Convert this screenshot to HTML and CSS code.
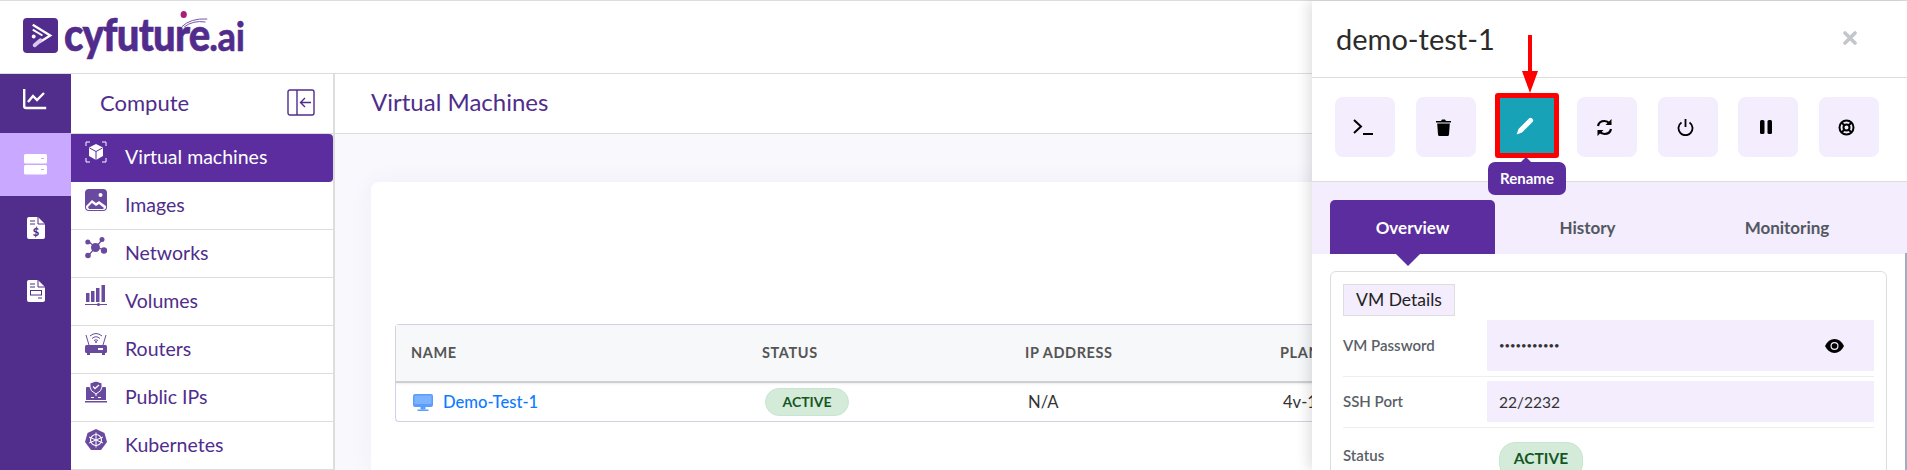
FILE: index.html
```html
<!doctype html>
<html>
<head>
<meta charset="utf-8">
<title>Virtual Machines</title>
<link rel="stylesheet" href="styles.css">
</head>
<body>
<div class="page">
	<header class="topbar">
		<svg class="logo-mark" viewBox="0 0 36 36">
			<rect width="36" height="36" rx="4" fill="#522c8d"/>
			<path d="M10 7l18 11-11 7" fill="none" stroke="#fff" stroke-width="2.400"/>
			<path d="M10 12l10 6" fill="none" stroke="#fff" stroke-width="2"/>
			<path d="M12 28l6-5" fill="none" stroke="#d9c8f2" stroke-width="4" stroke-linecap="round"/>
			<circle cx="11" cy="19" r="2" fill="#fff"/>
		</svg>
		<div class="logo-text">cyfuture<span class="logo-ai">.ai</span><i class="logo-dot"></i>
			<svg class="logo-swoosh" width="30" height="12" viewBox="0 0 30 12" fill="none" stroke="#6b4aa3"><path d="M0 11q10-9 29-8M3 11q10-7 24-5"/></svg>
		</div>
	</header>
	<div class="body-row">
		<nav class="rail">
			<a class="rail-item rail-first">
				<svg width="24" height="22" viewBox="0 0 24 22" fill="none" stroke="#fff" stroke-width="2.400"><path d="M1.200 1v17q0 2 2 2h20"/><path d="M5 14l5-6 4 4 7-7"/></svg>
			</a>
			<a class="rail-item rail-on">
				<svg width="24" height="21" viewBox="0 0 24 21" fill="#fff"><rect y="0" width="23" height="9.500" rx="1.500"/><rect y="11" width="23" height="9.500" rx="1.500"/><rect x="17" y="4" width="3" height="1" fill="#c9a8ff"/><rect x="17" y="15" width="3" height="1" fill="#c9a8ff"/></svg>
			</a>
			<a class="rail-item">
				<svg width="18" height="22" viewBox="0 0 18 22"><path d="M2 0h9l7 7v13q0 2-2 2H2q-2 0-2-2V2q0-2 2-2z" fill="#fff"/><path d="M11 0v7h7" fill="none" stroke="#512d8c"/><path d="M3 4h5M3 7h5" stroke="#512d8c"/><text x="9" y="19" text-anchor="middle" class="rail-dollar">$</text></svg>
			</a>
			<a class="rail-item">
				<svg width="18" height="22" viewBox="0 0 18 22"><path d="M2 0h9l7 7v13q0 2-2 2H2q-2 0-2-2V2q0-2 2-2z" fill="#fff"/><path d="M11 0v7h7" fill="none" stroke="#512d8c"/><path d="M3 4h5M3 7h5M11 18h4" stroke="#512d8c"/><rect x="3.500" y="10.500" width="11" height="4.500" fill="none" stroke="#512d8c"/></svg>
			</a>
		</nav>
		<aside class="subnav">
			<div class="subnav-head">
				<span class="subnav-title">Compute</span>
				<svg width="28" height="27" viewBox="0 0 28 27" fill="none" stroke="#512d8c" stroke-width="1.400"><rect x="1" y="1" width="26" height="25" rx="2"/><path d="M10 1v25M24 13.500H14M18 9l-4.500 4.500L18 18"/></svg>
			</div>
			<ul class="subnav-list">
				<li class="subnav-item active">
					<svg class="subnav-icon" viewBox="0 0 22 22"><path d="M1 5V1h4M17 1h4v4M21 17v4h-4M5 21H1v-4" fill="none" stroke="#fff"/><path d="M11 3l7 3.500v8.500l-7 4-7-4V6.500z" fill="#fff"/><path d="M4.500 7l6.500 3.500L17.500 7M11 10.500V19" fill="none" stroke="#5b2d9e"/></svg>
					Virtual machines
				</li>
				<li class="subnav-item">
					<svg class="subnav-icon" viewBox="0 0 22 22"><path d="M4 0h14q4 0 4 4v14q0 4-4 4H4q-4 0-4-4V4q0-4 4-4z" fill="#6a4a9f"/><circle cx="15.500" cy="6" r="2" fill="#fff"/><path d="M1 17l6-6 4 3 3-2 7 5v1q0 3-3 3H4q-3 0-3-3z" fill="#fff"/><path d="M3 18l4-4 4 3 3-2 5 4-1 1H4z" fill="#6a4a9f"/></svg>
					Images
				</li>
				<li class="subnav-item">
					<svg class="subnav-icon" viewBox="0 0 22 22" fill="#6a4a9f"><path d="M3 4l7 6M17 3l-6 7M3 19l7-8M11 10l8 3" stroke="#6a4a9f" stroke-width="1.200"/><circle cx="10.500" cy="10.500" r="4.500"/><circle cx="2.800" cy="5" r="2.500"/><circle cx="17" cy="2.500" r="2.500"/><circle cx="19" cy="13.500" r="3.200"/><circle cx="3" cy="18.500" r="2.800"/></svg>
					Networks
				</li>
				<li class="subnav-item">
					<svg class="subnav-icon" viewBox="0 0 22 22" fill="#6a4a9f"><rect x="1" y="8" width="3.500" height="9"/><rect x="6" y="6" width="3.500" height="11"/><rect x="11" y="3" width="3.500" height="14"/><rect x="16.500" y="0" width="3.500" height="17"/><rect x="0" y="19" width="22" height="1"/><circle cx="13.500" cy="19.500" r="1.500"/></svg>
					Volumes
				</li>
				<li class="subnav-item">
					<svg class="subnav-icon" viewBox="0 0 22 22"><path d="M7 5.500q4-3.500 8 0M5 3q6-5 12 0M9 7.500q2-1.500 4 0" fill="none" stroke="#6a4a9f"/><path d="M1 2l3 10M21 2l-3 10" stroke="#6a4a9f"/><circle cx="11" cy="9" r="1" fill="#6a4a9f"/><rect y="12" width="22" height="8" rx="1.500" fill="#6a4a9f"/><rect x="13" y="15" width="5" height="2" fill="#fff"/><rect x="2" y="20" width="3" height="2" fill="#6a4a9f"/><rect x="17" y="20" width="3" height="2" fill="#6a4a9f"/></svg>
					Routers
				</li>
				<li class="subnav-item">
					<svg class="subnav-icon" viewBox="0 0 22 22"><path d="M2 6h18q1 0 1 1v12H1V7q0-1 1-1z" fill="#6a4a9f"/><path d="M11 0l6 2v4q0 4-6 7-6-3-6-7V2z" fill="#6a4a9f" stroke="#fff"/><path d="M8 5.500l2 2 4-3.500" fill="none" stroke="#fff" stroke-width="1.300"/><path d="M11 12v3M6 16.500h3M13 16.500h3" stroke="#fff"/><rect y="20" width="22" height="1.500" fill="#6a4a9f"/></svg>
					Public IPs
				</li>
				<li class="subnav-item">
					<svg class="subnav-icon" viewBox="0 0 22 22"><path d="M11 0l8.500 4 2.500 9-6 8H6l-6-8 2.500-9z" fill="#6a4a9f"/><circle cx="11" cy="11" r="5.500" fill="none" stroke="#fff" stroke-width="1.200"/><path d="M11 3.500v15M4 8l14 6M18 8L4 14" stroke="#fff"/></svg>
					Kubernetes
				</li>
			</ul>
		</aside>
		<main class="main">
			<h1 class="main-title">Virtual Machines</h1>
			<div class="main-body">
				<section class="card">
					<div class="vm-table">
						<div class="vm-row vm-head">
							<div>NAME</div>
							<div>STATUS</div>
							<div>IP ADDRESS</div>
							<div>PLAN</div>
						</div>
						<div class="vm-row vm-data">
							<div class="vm-name">
								<svg width="20" height="17" viewBox="0 0 20 17" fill="#5b9dff"><path d="M2 0h16q2 0 2 2v9q0 2-2 2H2q-2 0-2-2V2q0-2 2-2z"/><rect x="1.500" y="1.500" width="17" height="8.500" fill="#7db2ff"/><rect x="7.500" y="13" width="5" height="2.500"/><rect x="4.500" y="15.500" width="11" height="1.500"/></svg>
								Demo-Test-1
							</div>
							<div><span class="pill">ACTIVE</span></div>
							<div class="vm-ip">N/A</div>
							<div class="vm-ip">4v-16</div>
						</div>
					</div>
				</section>
			</div>
		</main>
	</div>

	<!-- side panel, sits over the table -->
	<section class="panel">
		<div class="panel-head">
			<h2 class="panel-title">demo-test-1</h2>
			<svg class="panel-close" width="14" height="14" viewBox="0 0 14 14"><path d="M2 2l10 10M12 2L2 12" stroke="#c3c7cb" stroke-width="3.600" stroke-linecap="round"/></svg>
		</div>
		<div class="actions">
			<button class="act">
				<svg width="20" height="16" viewBox="0 0 20 16" fill="none" stroke="#000" stroke-width="2"><path d="M1 1l7 6.500L1 14M10 15h10"/></svg>
			</button>
			<button class="act">
				<svg width="15" height="17" viewBox="0 0 15 17"><path d="M1.200 4.500h12.600l-.8 11q-.1 1.500-1.500 1.500H3.500q-1.400 0-1.500-1.500z"/><path d="M0 2h5l1-1.500h3L10 2h5v1.500H0z"/></svg>
			</button>
			<button class="act act-on">
				<svg width="18" height="18" viewBox="0 0 18 18" fill="#fff"><path d="M12 2.500l3.500 3.500L6 15.500 .6 17.400 2.500 12z"/><path d="M13 1.500q1.500-1.500 3-.1l.7.700q1.300 1.500-.2 3L15.300 6 11.900 2.600z"/></svg>
			</button>
			<button class="act">
				<svg width="17" height="17" viewBox="0 0 17 17" fill="none" stroke="#000" stroke-width="2.200"><path d="M2 7q1-5 6.500-5 3 0 5 2.500M15 10q-1 5-6.500 5-3 0-5-2.500"/><path d="M15.500 0v6h-6zM1.500 17v-6h6z" fill="#000" stroke="none"/></svg>
			</button>
			<button class="act">
				<svg width="17" height="17" viewBox="0 0 17 17" fill="none" stroke="#000" stroke-width="1.800"><path d="M4.500 3.500a7 7 0 1 0 8 0M8.500 0v8"/></svg>
			</button>
			<button class="act">
				<svg width="12" height="14" viewBox="0 0 12 14"><rect width="4.500" height="14" rx="1.500"/><rect x="7.500" width="4.500" height="14" rx="1.500"/></svg>
			</button>
			<button class="act">
				<svg width="17" height="17" viewBox="0 0 17 17" fill="none" stroke="#000" stroke-width="2"><circle cx="8.500" cy="8.500" r="7"/><circle cx="8.500" cy="8.500" r="3"/><path d="M3.500 3.500l3 3M13.500 3.500l-3 3M3.500 13.500l3-3M13.500 13.500l-3-3"/></svg>
			</button>
		</div>
		<div class="tabs">
			<div class="tab tab-on">Overview</div>
			<div class="tab">History</div>
			<div class="tab">Monitoring</div>
		</div>
		<div class="details">
			<div class="details-tag">VM Details</div>
			<div class="field">
				<div class="field-label">VM Password</div>
				<div class="field-value field-pass">
					<span class="pass-dots">•••••••••••</span>
					<svg width="19" height="14" viewBox="0 0 19 14"><path d="M9.500 0q6 0 9.500 7-3.500 7-9.500 7T0 7q3.500-7 9.500-7z"/><circle cx="9.500" cy="7" r="4" fill="#f3edfd"/><circle cx="9.500" cy="7" r="2.800"/></svg>
				</div>
			</div>
			<div class="field">
				<div class="field-label">SSH Port</div>
				<div class="field-value">22/2232</div>
			</div>
			<div class="field field-last">
				<div class="field-label">Status</div>
				<div class="field-plain"><span class="pill pill-big">ACTIVE</span></div>
			</div>
		</div>
		<i class="panel-scroll"></i>
	</section>

	<div class="tooltip">Rename</div>
	<svg class="red-arrow" width="16" height="58" viewBox="0 0 16 58"><path d="M8 1v38" stroke="#f00" stroke-width="4" stroke-linecap="round"/><path d="M0 36h16L8 58z" fill="#f00"/></svg>
</div>
</body>
</html>
```

FILE: styles.css
```css
*{margin:0;padding:0;box-sizing:border-box}
html,body{height:100%;overflow:hidden}
body{font-family:"Lato","Noto Sans",sans-serif;background:#fff;color:#333}
ul{list-style:none}
svg{display:block;flex:none}
.page{position:relative;width:1907px;height:470px;overflow:hidden}

.topbar{height:74px;border-top:1px solid #ddd;border-bottom:1px solid #ddd;display:flex;align-items:center;padding-left:23px;padding-bottom:4px}
.logo-mark{width:35px;height:35px;margin-right:6px}
.logo-text{position:relative;font-size:45px;font-weight:900;color:#522c8d;letter-spacing:-.9px;line-height:44px;transform:scaleX(.89);transform-origin:left center;-webkit-text-stroke:.6px #522c8d}
.logo-ai{font-weight:700;font-size:41px;letter-spacing:-.5px}
.logo-dot{position:absolute;left:131px;top:-1px;width:7px;height:7px;border-radius:50%;background:#a81e78}
.logo-swoosh{position:absolute;left:132px;top:4px}

.body-row{display:flex;height:396px}
.rail{width:71px;background:#512d8c;flex:none}
.rail-item{display:flex;justify-content:center;height:63px;padding-top:21px}
.rail-first{height:59px;padding-top:14px}
.rail-first svg{margin-left:-1px}
.rail-on{background:#c9a8ff;padding-top:21px;height:63px}
.rail-dollar{font-size:11px;font-weight:900;fill:#512d8c}

.subnav{width:264px;border-right:2px solid #ddd;flex:none}
.subnav-head{height:60px;border-bottom:1px solid #ddd;display:flex;align-items:center;justify-content:space-between;padding:0 18px 2px 29px}
.subnav-title{font-size:22px;color:#4f2d8c}
.subnav-item{height:48px;border-bottom:1px solid #ddd;display:flex;gap:18px;padding:7px 0 0 14px;font-size:19.500px;line-height:32px;color:#4f2d8c}
.subnav-item.active{background:#5b2d9e;color:#fff;border-bottom:0;border-radius:0 4px 4px 0}
.subnav-icon{width:22px;height:22px}

.main{flex:1;min-width:0}
.main-title{height:60px;border-bottom:1px solid #ddd;padding-left:36px;font-size:24px;font-weight:400;line-height:56px;color:#4f2d8c}
.main-body{height:336px;background:#f9f8fd;padding:48px 0 0 36px}
.card{height:288px;background:#fff;border-radius:8px 0 0 0;box-shadow:0 0 24px rgba(70,50,130,.05);padding:142px 0 0 24px}
.vm-table{border:1px solid #d3d0e4;border-right:0;border-radius:4px 0 0 4px}
.vm-row{display:grid;grid-template-columns:351px 263px 255px 1fr}
.vm-head{height:58px;background:#f7f8fa;border-bottom:2px solid #cfcfcf;align-items:center;padding:0 0 2px 15px;font-size:14.500px;font-weight:700;color:#555;letter-spacing:.6px}
.vm-data{height:38px;align-items:center;padding-left:14px;font-size:16.600px;box-shadow:inset 0 3px 3px -3px rgba(0,0,0,.15)}
.vm-name{display:flex;align-items:center;gap:10px;padding-left:3px;color:#0d7bff;font-weight:500}
.vm-ip{padding-left:4px;color:#333}
.pill{display:inline-block;margin-left:4px;width:84px;height:28px;line-height:26px;text-align:center;background:#d4ebd9;border:1px solid #c6e6cf;border-radius:14px;font-size:14px;font-weight:700;color:#155724}
.pill-big{margin-left:0;height:38px;line-height:30px;border-radius:16px;font-size:15.500px}

.panel{position:absolute;left:1312px;top:1px;width:595px;height:469px;background:#fff;box-shadow:-4px 0 12px rgba(0,0,0,.12)}
.panel-head{height:77px;border-bottom:1px solid #ddd;display:flex;align-items:center;justify-content:space-between;padding:0 50px 2px 24px}
.panel-title{font-size:29px;font-weight:400;color:#2b2b2b}
.actions{height:104px;border-bottom:1px solid #ddd;display:grid;grid-template-columns:repeat(7,60px);column-gap:20.670px;padding:19px 0 0 23px}
.act{width:60px;height:60px;background:#f3edfd;border:0;border-radius:8px;display:flex;align-items:center;justify-content:center;padding-right:4px}
.act-on{width:64px;height:65px;margin:-4px 0 0 -1px;background:#18a2b8;border:5px solid #f00;border-radius:3px}
.tabs{height:72px;background:#f3edfd;padding:18px 13px 0 18px;display:grid;grid-template-columns:165px 185px 214px}
.tab{display:flex;align-items:center;justify-content:center;height:54px;font-size:17px;font-weight:700;color:#525760;margin-top:0}
.tab-on{position:relative;background:#5b2d9e;color:#fff;border-radius:5px 5px 0 0}
.tab-on::after{content:"";position:absolute;left:66px;top:54px;border:12px solid transparent;border-top-color:#5b2d9e;border-bottom:0}
.details{margin:17px 0 0 18px;width:557px;height:300px;border:1px solid #ddd;border-radius:6px;padding:12px 12px 0 12px}
.details-tag{width:112px;height:32px;background:#f3edfd;border:1px solid #ddd;font-size:17.500px;line-height:29px;text-align:center;color:#222;margin-bottom:4px}
.field{display:grid;grid-template-columns:144px 1fr;border-bottom:1px solid #eee;padding-bottom:5px;margin-bottom:4px}
.field-last{border:0}
.field-label{display:flex;align-items:center;font-size:15px;font-weight:600;color:#5a5f66;padding-bottom:2px}
.field-value{height:41px;background:#f3edfd;padding:0 12px;display:flex;align-items:center;font-size:15.500px;color:#333}
.field-pass{height:51px;justify-content:space-between;padding-right:30px}
.pass-dots{letter-spacing:0;font-size:9.500px}
.field-plain{padding:10px 0 0 12px}
.panel-scroll{position:absolute;right:0;top:252px;width:2px;height:217px;background:#a0aec0}

.tooltip{position:absolute;left:1488px;top:162px;width:78px;height:33px;background:#5b2d9e;border-radius:7px;color:#fff;font-size:15px;font-weight:700;line-height:33px;text-align:center}
.tooltip::before{content:"";position:absolute;left:32px;top:-5px;border:6px solid transparent;border-bottom-color:#5b2d9e;border-top:0}
.red-arrow{position:absolute;left:1522px;top:35px}
```
